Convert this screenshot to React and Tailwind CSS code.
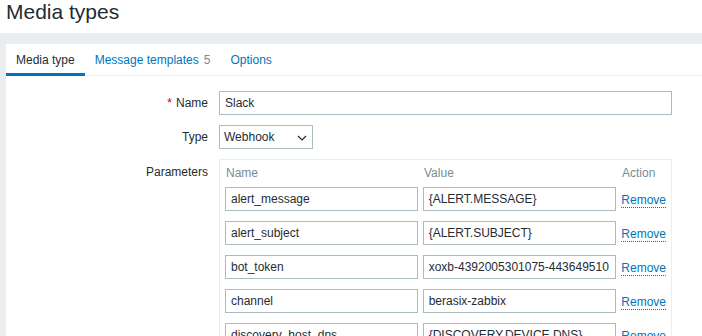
import React from "react";

const params = [
  { name: "alert_message", value: "{ALERT.MESSAGE}" },
  { name: "alert_subject", value: "{ALERT.SUBJECT}" },
  { name: "bot_token", value: "xoxb-4392005301075-443649510" },
  { name: "channel", value: "berasix-zabbix" },
  { name: "discovery_host_dns", value: "{DISCOVERY.DEVICE.DNS}" },
];

const inputCls =
  "h-[24px] border border-[#acbbc2] bg-white px-[5px] text-[12px] leading-[22px] text-[#1f2c33] overflow-hidden whitespace-nowrap";

const App = () => {
  return (
    <div className="w-[702px] h-[336px] overflow-hidden bg-white font-['Liberation_Sans',Arial,sans-serif] text-[#1f2c33]">
      {/* Header */}
      <h1 className="h-[33px] pl-[6px] text-[21px] leading-[24px] text-[#1f2c33]">
        Media types
      </h1>

      <div className="bg-[#ebeef0] pt-[11px] pl-[6px] h-[303px]">
        <div className="bg-white h-full">
          {/* Tabs */}
          <div className="flex h-[32px] border-b border-[#ebeef0] text-[12px]">
            <div className="px-[10px] flex items-center border-b-[3px] border-[#0275b8] -mb-px pt-[2px] text-[#1f2c33]">
              Media type
            </div>
            <div className="px-[10px] flex items-center text-[#0275b8]">
              Message templates
              <span className="ml-[5px] text-[#768d99]">5</span>
            </div>
            <div className="px-[10px] flex items-center text-[#0275b8]">
              Options
            </div>
          </div>

          {/* Form */}
          <div className="pt-[15px] text-[12px]">
            <div className="flex items-center">
              <div className="w-[202px] text-right">
                <span className="text-[#d40000] mr-[4px]">*</span>Name
              </div>
              <div className={`${inputCls} ml-[11px] w-[453px]`}>Slack</div>
            </div>

            <div className="flex items-center mt-[10px]">
              <div className="w-[202px] text-right">Type</div>
              <div className={`${inputCls} ml-[11px] w-[94px] flex items-center justify-between pl-[4px] pr-[5px]`}>
                <span>Webhook</span>
                <svg width="10" height="6" viewBox="0 0 10 6" className="mt-px">
                  <path d="M1 1 L5 5 L9 1" fill="none" stroke="#1f2c33" strokeWidth="1.2" />
                </svg>
              </div>
            </div>

            <div className="flex items-start mt-[10px]">
              <div className="w-[202px] text-right pt-[4px] leading-[18px]">Parameters</div>
              <div className="ml-[11px] w-[453px] border border-[#ebeef0] pt-[4px] px-[5px] pb-[10px]">
                <div className="flex h-[18px] leading-[18px] text-[#768d99]">
                  <div className="w-[193px] pl-px">Name</div>
                  <div className="w-[194px] ml-[5px] pl-px">Value</div>
                  <div className="ml-[5px]">Action</div>
                </div>
                <div className="flex flex-col gap-[10px] mt-[5px]">
                  {params.map((p) => (
                    <div key={p.name} className="flex items-center">
                      <div className={`${inputCls} w-[193px]`}>{p.name}</div>
                      <div className={`${inputCls} w-[194px] ml-[5px]`}>{p.value}</div>
                      <span className="ml-[5px] text-[#0275b8] border-b border-dotted border-[#0275b8] leading-[14px] mt-[2px]">
                        Remove
                      </span>
                    </div>
                  ))}
                </div>
              </div>
            </div>
          </div>
        </div>
      </div>
    </div>
  );
};

export default App;
